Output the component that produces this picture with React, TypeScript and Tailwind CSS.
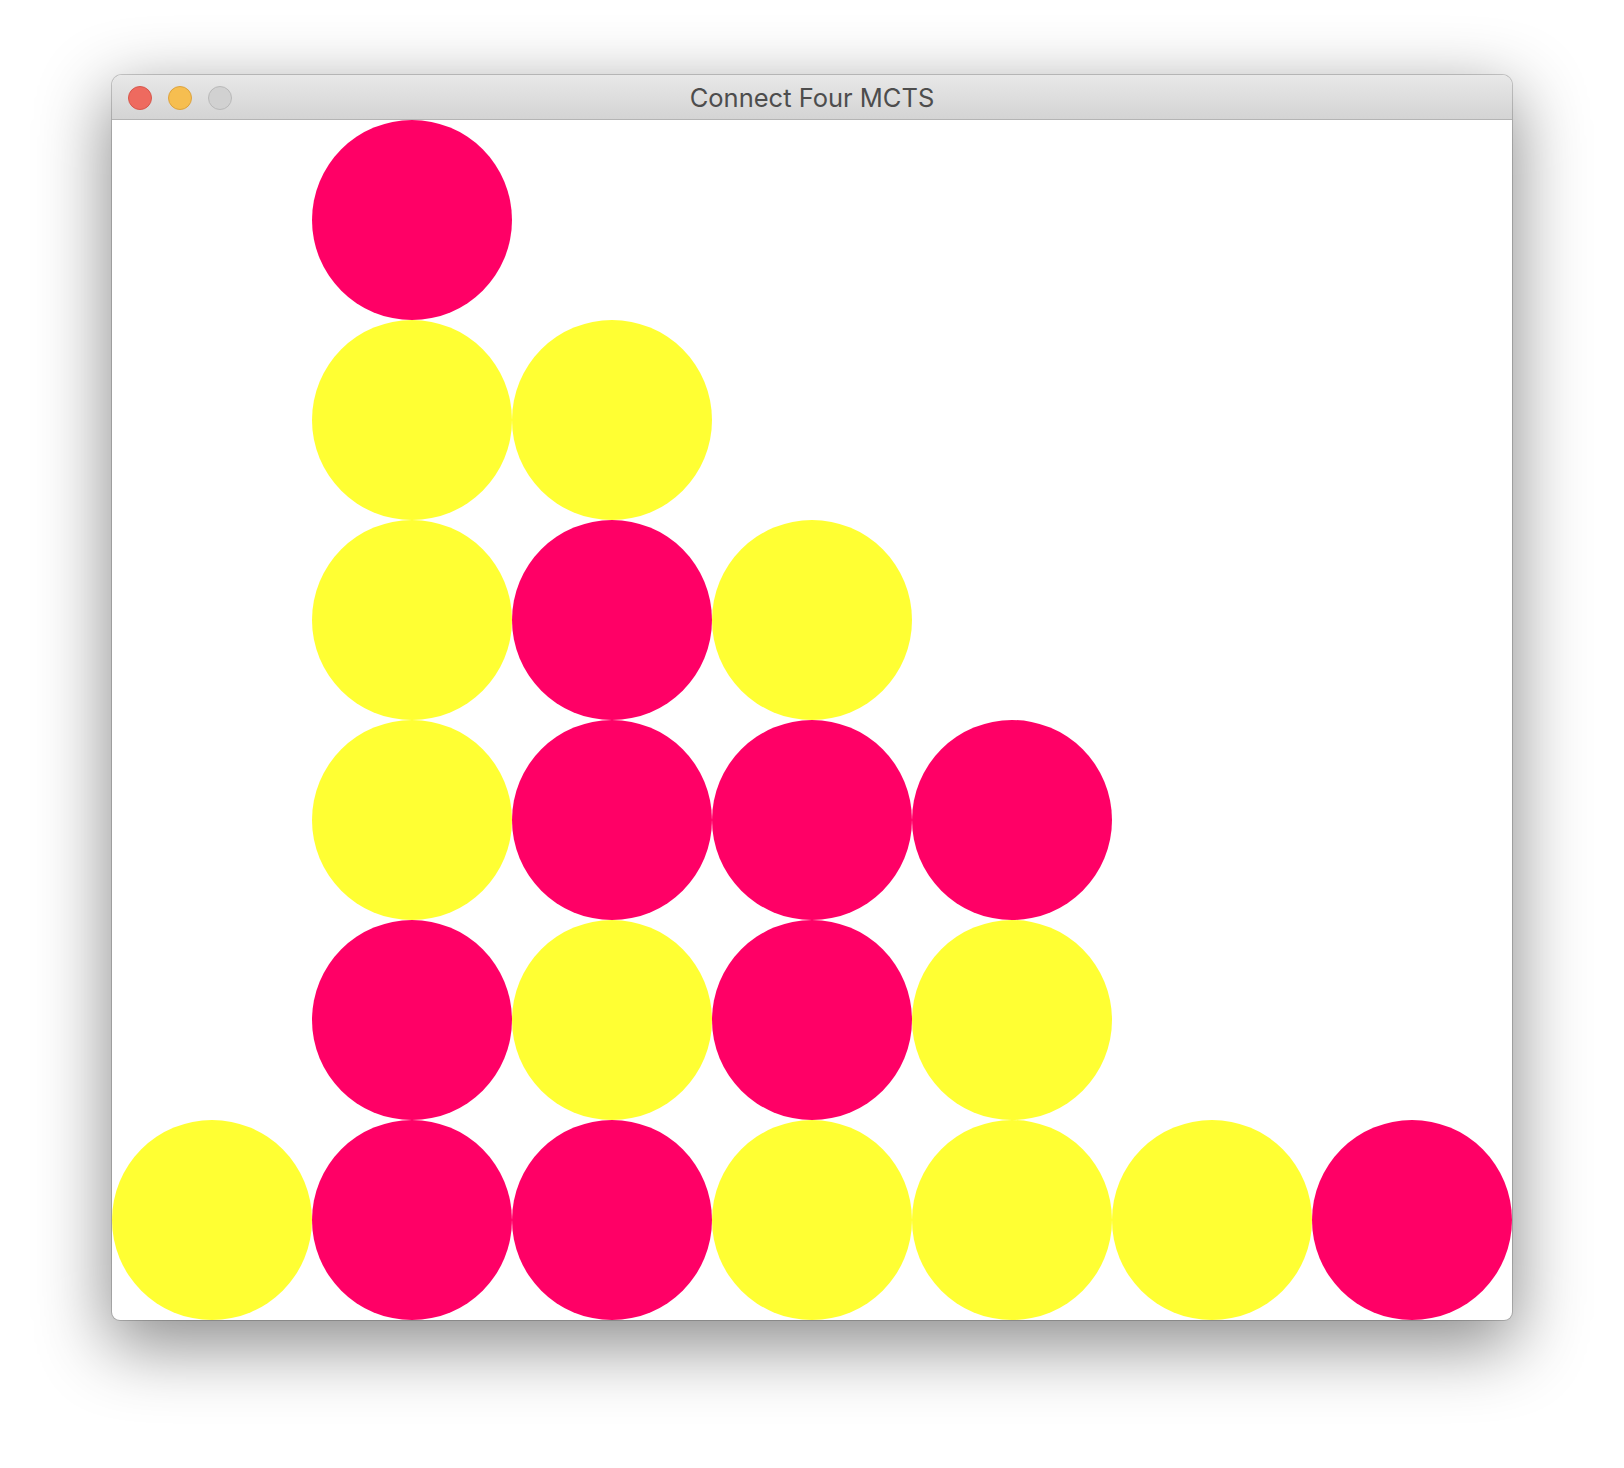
const P = "pink";
const Y = "yellow";
const E = "";

// rows from top, 7 columns each
const board: ReadonlyArray<ReadonlyArray<string>> = [
  [E, P, E, E, E, E, E],
  [E, Y, Y, E, E, E, E],
  [E, Y, P, Y, E, E, E],
  [E, Y, P, P, P, E, E],
  [E, P, Y, P, Y, E, E],
  [Y, P, P, Y, Y, Y, P],
];

function Disc({ color }: { color: string }) {
  if (color === P) return <div className="h-[200px] w-[200px] rounded-full bg-[#ff0066]" />;
  if (color === Y) return <div className="h-[200px] w-[200px] rounded-full bg-[#ffff33]" />;
  return <div className="h-[200px] w-[200px]" />;
}

export default function App() {
  return (
    <div className="h-[1468px] w-[1624px] bg-white pl-[112px] pt-[75px]">
      <div className="w-[1400px] overflow-hidden rounded-t-[10px] rounded-b-[8px] bg-white shadow-[0_22px_70px_4px_rgba(0,0,0,0.45),0_0_0_1px_rgba(0,0,0,0.18)]">
        <div className="relative flex h-[45px] items-center justify-center border-b border-[#b4b4b4] bg-gradient-to-b from-[#e8e8e8] to-[#d4d4d4] pt-[3px]">
          <div className="absolute left-[16px] top-[11px] flex gap-[16px]">
            <span className="h-[24px] w-[24px] rounded-full border border-[#d7574c] bg-[#ee6a5f]" />
            <span className="h-[24px] w-[24px] rounded-full border border-[#dda33e] bg-[#f6be50]" />
            <span className="h-[24px] w-[24px] rounded-full border border-[#b9b9b9] bg-[#d1d1d1]" />
          </div>
          <span className="font-['Inter','Noto_Sans',sans-serif] text-[25.5px] text-[#4d4d4d]">
            Connect Four MCTS
          </span>
        </div>
        <div className="grid grid-cols-7">
          {board.map((row, r) =>
            row.map((cell, c) => <Disc key={`${r}-${c}`} color={cell} />)
          )}
        </div>
      </div>
    </div>
  );
}
